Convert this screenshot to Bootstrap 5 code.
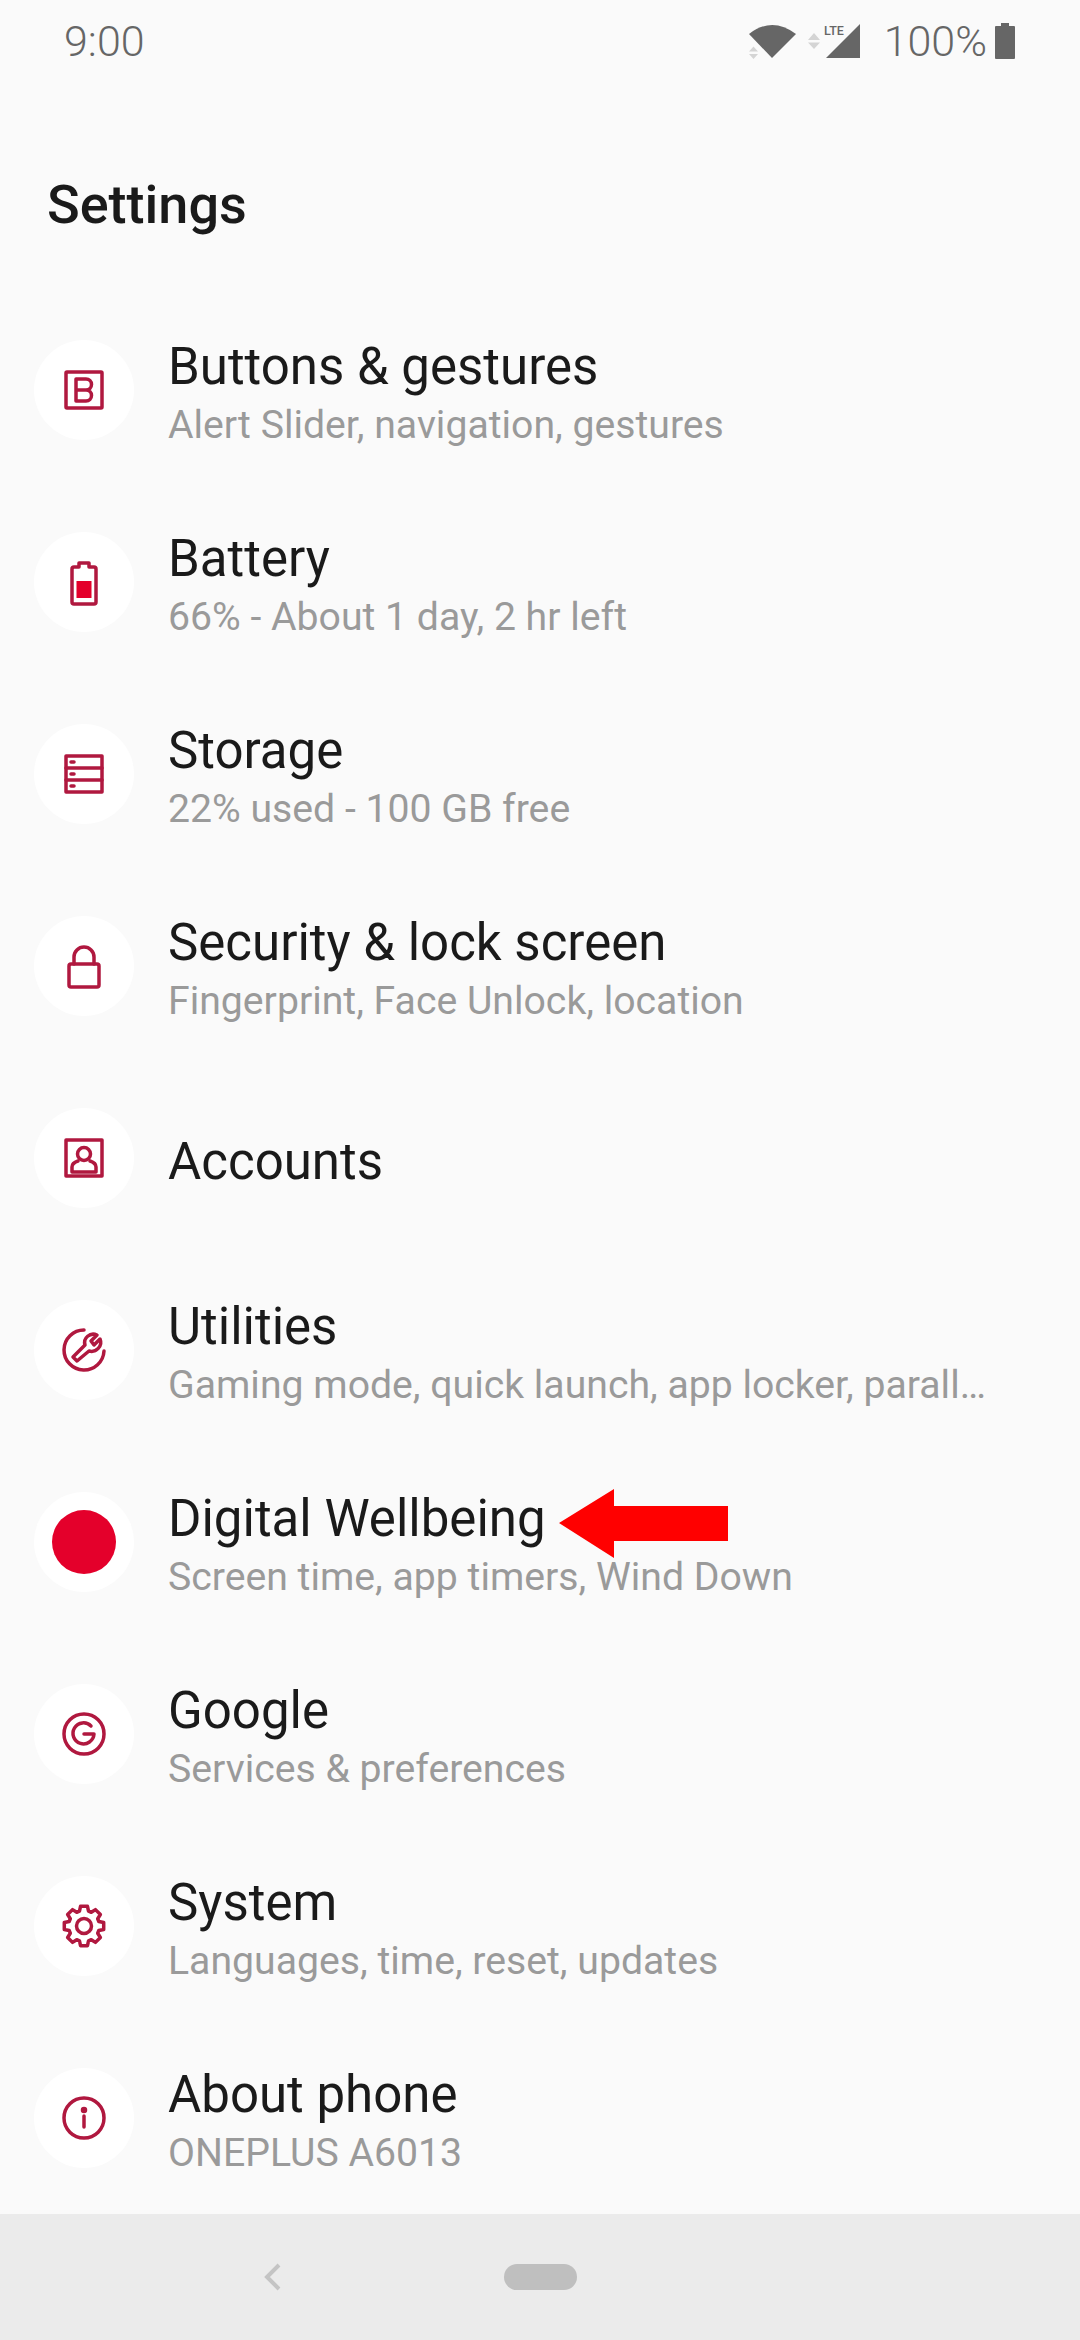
<!DOCTYPE html>
<html lang="en">
<head>
  <meta charset="UTF-8">
  <meta name="viewport" content="width=device-width, initial-scale=1">
  <title>Settings</title>
  <link href="https://cdn.jsdelivr.net/npm/bootstrap@5.3.3/dist/css/bootstrap.min.css" rel="stylesheet">
  <style>
    body { background: #fafafa; font-family: Roboto, sans-serif; }
    .phone { height: 2340px; }
    .status-bar { height: 82px; padding: 0 65px 0 64px; color: #666; font-size: 43px; line-height: 82px; font-weight: 300; }
    .status-bar svg { display: block; fill: #666; }
    .lte-label { font-size: 12.500px; font-weight: 500; }
    .page-title { height: 212px; margin: 0; padding: 90px 0 0 47px; font-size: 54px; line-height: 66px; font-weight: 500; color: #1a1a1a; }
    .settings-row { height: 192px; padding: 0 88px 0 34px; background: transparent; border: 0; gap: 34px; }
    .icon-disc { width: 100px; height: 100px; background: #fff; }
    .icon-disc svg { fill: none; stroke: #b0183f; stroke-width: 3.500; stroke-linejoin: round; stroke-linecap: round; }
    .row-text { padding-top: 8px; }
    .row-title { font-size: 51px; line-height: 60px; margin-bottom: 2px; color: #1a1a1a; }
    .row-single { padding-top: 10px; }
    .row-sub { font-size: 39.200px; line-height: 52px; color: #9a9a9a; }
    .arrow-note { position: absolute; left: 559px; top: 43px; }
    .bottom-nav { height: 126px; background: #ebebeb; }
    .nav-back { position: absolute; left: 263px; top: 48px; }
    .nav-pill { width: 73px; height: 26px; background: #bfbfbf; }
  </style>
</head>
<body>
  <div class="phone d-flex flex-column">

    <div class="status-bar d-flex justify-content-between align-items-center">
      <span>9:00</span>
      <div class="d-flex align-items-center">
        <svg width="114" height="40" viewBox="0 0 114 40">
          <path d="M3 13 Q26 -5 50 13 L26 37 Z"/>
          <path d="M3 30.500 l4.500 -5 4.500 5z M3 33 l4.500 5 4.500 -5z" fill="#d4d4d4"/>
          <path d="M62 19 l6 -7 6 7z M62 21.500 l6 6.500 6 -6.500z" fill="#d4d4d4"/>
          <text class="lte-label" x="78" y="14">LTE</text>
          <path d="M80 37 L114 3 V37 Z"/>
        </svg>
        <span class="ms-4">100%</span>
        <svg class="ms-2" width="20" height="36" viewBox="0 0 20 36"><path d="M6 0 H14 V3 H19 Q20 3 20 4 V35 Q20 36 19 36 H1 Q0 36 0 35 V4 Q0 3 1 3 H6 Z"/></svg>
      </div>
    </div>

    <h1 class="page-title">Settings</h1>

    <div class="list-group list-group-flush flex-grow-1">

      <div class="list-group-item settings-row d-flex align-items-center">
        <div class="icon-disc rounded-circle d-flex align-items-center justify-content-center flex-shrink-0">
          <svg width="48" height="48" viewBox="-24 -24 48 48"><rect x="-18" y="-18" width="36" height="36" rx="1"/><path d="M-8 -11 H2 a5.500 5.500 0 0 1 0 11 H-8 Z M2 0 a5.500 5.500 0 0 1 0 11 H-8 V0"/></svg>
        </div>
        <div class="row-text text-truncate">
          <div class="row-title">Buttons &amp; gestures</div>
          <div class="row-sub text-truncate">Alert Slider, navigation, gestures</div>
        </div>
      </div>

      <div class="list-group-item settings-row d-flex align-items-center">
        <div class="icon-disc rounded-circle d-flex align-items-center justify-content-center flex-shrink-0">
          <svg width="48" height="48" viewBox="-24 -24 48 48"><path d="M-5 -19 H5 V-15 H10 Q12 -15 12 -13 V20 Q12 22 10 22 H-10 Q-12 22 -12 20 V-13 Q-12 -15 -10 -15 H-5 Z"/><rect x="-7.500" y="-1" width="15" height="17" style="fill:#e4002b;stroke:none"/></svg>
        </div>
        <div class="row-text text-truncate">
          <div class="row-title">Battery</div>
          <div class="row-sub text-truncate">66% - About 1 day, 2 hr left</div>
        </div>
      </div>

      <div class="list-group-item settings-row d-flex align-items-center">
        <div class="icon-disc rounded-circle d-flex align-items-center justify-content-center flex-shrink-0">
          <svg width="48" height="48" viewBox="-24 -24 48 48"><rect x="-18" y="-18" width="36" height="36"/><path d="M-18 -6 H18 M-18 6 H18 M-13 -12 H-10 M-13 0 H-10 M-13 12 H-10"/></svg>
        </div>
        <div class="row-text text-truncate">
          <div class="row-title">Storage</div>
          <div class="row-sub text-truncate">22% used - 100 GB free</div>
        </div>
      </div>

      <div class="list-group-item settings-row d-flex align-items-center">
        <div class="icon-disc rounded-circle d-flex align-items-center justify-content-center flex-shrink-0">
          <svg width="48" height="48" viewBox="-24 -24 48 48"><rect x="-15" y="-2" width="30" height="23" rx="2"/><path d="M-10 -2 V-9 a10 10 0 0 1 20 0 V-2"/></svg>
        </div>
        <div class="row-text text-truncate">
          <div class="row-title">Security &amp; lock screen</div>
          <div class="row-sub text-truncate">Fingerprint, Face Unlock, location</div>
        </div>
      </div>

      <div class="list-group-item settings-row d-flex align-items-center">
        <div class="icon-disc rounded-circle d-flex align-items-center justify-content-center flex-shrink-0">
          <svg width="48" height="48" viewBox="-24 -24 48 48"><rect x="-18" y="-18" width="36" height="36"/><circle cx="0" cy="-4" r="6.500"/><path d="M-12 14 V9 Q-12 5 -6 3 M12 14 V9 Q12 5 6 3 M-12 14 H12"/></svg>
        </div>
        <div class="row-single text-truncate">
          <div class="row-title">Accounts</div>
        </div>
      </div>

      <div class="list-group-item settings-row d-flex align-items-center">
        <div class="icon-disc rounded-circle d-flex align-items-center justify-content-center flex-shrink-0">
          <svg width="48" height="48" viewBox="-24 -24 48 48"><path d="M0 -20 A20 20 0 1 0 20 1"/><path d="M-7 11 L-11 7 L1 -5 C-1 -12 6 -18 13 -15 L7 -9 L10 -5 L16 -11 C19 -4 12 3 5 1 Z"/></svg>
        </div>
        <div class="row-text text-truncate">
          <div class="row-title">Utilities</div>
          <div class="row-sub text-truncate">Gaming mode, quick launch, app locker, parallel apps</div>
        </div>
      </div>

      <div class="list-group-item settings-row d-flex align-items-center position-relative">
        <div class="icon-disc rounded-circle d-flex align-items-center justify-content-center flex-shrink-0">
          <svg width="64" height="64" viewBox="-32 -32 64 64"><circle cx="0" cy="0" r="32" style="fill:#e4002b;stroke:none"/></svg>
        </div>
        <div class="row-text text-truncate">
          <div class="row-title">Digital Wellbeing</div>
          <div class="row-sub text-truncate">Screen time, app timers, Wind Down</div>
        </div>
        <svg class="arrow-note" width="170" height="70" viewBox="0 0 170 70"><path d="M0 34 L55 0 V17 H169 V52 H55 V69 Z" fill="#f00"/></svg>
      </div>

      <div class="list-group-item settings-row d-flex align-items-center">
        <div class="icon-disc rounded-circle d-flex align-items-center justify-content-center flex-shrink-0">
          <svg width="48" height="48" viewBox="-24 -24 48 48"><circle cx="0" cy="0" r="20"/><path d="M-0 0 H10 A10.500 10.500 0 1 1 7 -8"/></svg>
        </div>
        <div class="row-text text-truncate">
          <div class="row-title">Google</div>
          <div class="row-sub text-truncate">Services &amp; preferences</div>
        </div>
      </div>

      <div class="list-group-item settings-row d-flex align-items-center">
        <div class="icon-disc rounded-circle d-flex align-items-center justify-content-center flex-shrink-0">
          <svg width="48" height="48" viewBox="-24 -24 48 48"><polygon points="-3.470,-19.700 3.470,-19.700 4.530,-14.820 7.280,-13.690 11.470,-16.380 16.380,-11.470 13.690,-7.280 14.820,-4.530 19.700,-3.470 19.700,3.470 14.820,4.530 13.690,7.280 16.380,11.470 11.470,16.380 7.280,13.690 4.530,14.820 3.470,19.700 -3.470,19.700 -4.530,14.820 -7.280,13.690 -11.470,16.380 -16.380,11.470 -13.690,7.280 -14.820,4.530 -19.700,3.470 -19.700,-3.470 -14.820,-4.530 -13.690,-7.280 -16.380,-11.470 -11.470,-16.380 -7.280,-13.690 -4.530,-14.820"/><circle cx="0" cy="0" r="7.500"/></svg>
        </div>
        <div class="row-text text-truncate">
          <div class="row-title">System</div>
          <div class="row-sub text-truncate">Languages, time, reset, updates</div>
        </div>
      </div>

      <div class="list-group-item settings-row d-flex align-items-center">
        <div class="icon-disc rounded-circle d-flex align-items-center justify-content-center flex-shrink-0">
          <svg width="48" height="48" viewBox="-24 -24 48 48"><circle cx="0" cy="0" r="20"/><path d="M0 -2 V9"/><circle cx="0" cy="-8" r="1.500" style="fill:#b0183f"/></svg>
        </div>
        <div class="row-text text-truncate">
          <div class="row-title">About phone</div>
          <div class="row-sub text-truncate">ONEPLUS A6013</div>
        </div>
      </div>

    </div>

    <div class="bottom-nav position-relative d-flex align-items-center justify-content-center">
      <svg class="nav-back" width="20" height="30" viewBox="0 0 20 30"><path d="M16 3 L4 15 L16 27" fill="none" stroke="#c4c4c4" stroke-width="4"/></svg>
      <div class="nav-pill rounded-pill"></div>
    </div>

  </div>
  <script src="https://cdn.jsdelivr.net/npm/bootstrap@5.3.3/dist/js/bootstrap.bundle.min.js"></script>
</body>
</html>
